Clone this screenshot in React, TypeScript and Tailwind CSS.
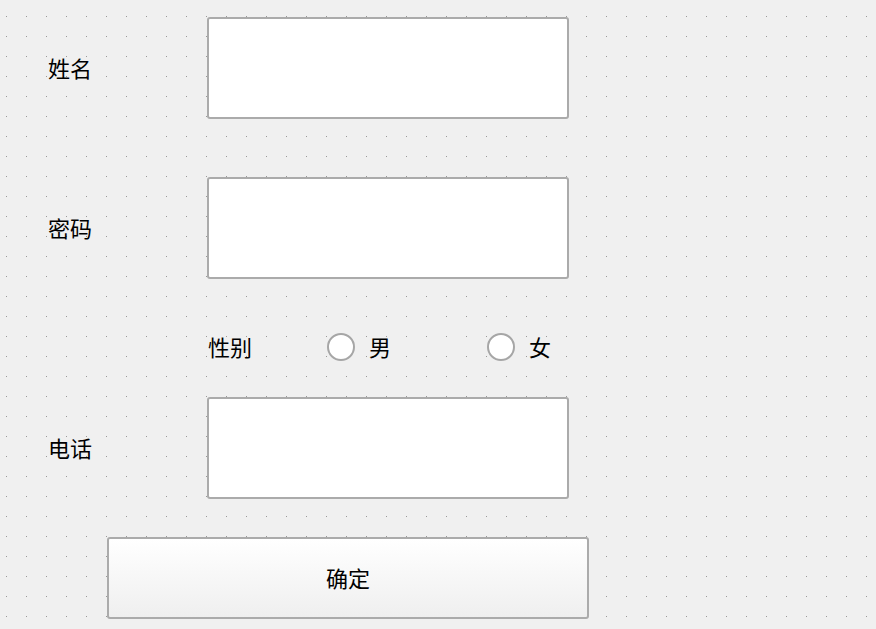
const inputBox =
  "h-[102px] w-[362px] shrink-0 rounded-[3px] border-2 border-[#ababab] bg-white";

function Radio({ label, checked = false }: { label: string; checked?: boolean }) {
  return (
    <label className="flex items-center gap-[14px]">
      <span className="flex h-[28px] w-[28px] items-center justify-center rounded-full border-2 border-[#a6a6a6] bg-white">
        {checked && <span className="h-[10px] w-[10px] rounded-full bg-[#333]" />}
      </span>
      <span className="pb-[2px]">{label}</span>
    </label>
  );
}

function FieldRow({ label }: { label: string }) {
  return (
    <div className="flex items-center">
      <div className="w-[207px] shrink-0 pb-[3px] pl-[48px]">{label}</div>
      <div className={inputBox} />
    </div>
  );
}

export default function App() {
  return (
    <div
      className="h-[629px] w-[876px] overflow-hidden bg-[#999999] [background-image:linear-gradient(to_right,transparent_1px,#f0f0f0_1px),linear-gradient(to_bottom,transparent_1px,#f0f0f0_1px)] [background-size:20px_20px] [background-position:6px_16px] text-[22px] leading-none text-black"
      style={{ fontFamily: '"Noto Sans CJK SC", "Noto Sans", sans-serif' }}
    >
      <div className="flex flex-col pt-[17px]">
        <FieldRow label="姓名" />

        <div className="mt-[58px]">
          <FieldRow label="密码" />
        </div>

        <div className="mt-[54px] flex h-[28px] items-center pl-[208px]">
          <span className="w-[119px] shrink-0 pb-[2px]">性别</span>
          <div className="w-[160px] shrink-0">
            <Radio label="男" />
          </div>
          <Radio label="女" />
        </div>

        <div className="mt-[36px]">
          <FieldRow label="电话" />
        </div>

        <div className="mt-[38px] pl-[107px]">
          <button className="flex h-[82px] w-[482px] items-center justify-center rounded-[3px] border-2 border-[#ababab] bg-gradient-to-b from-white to-[#efefef] pb-[3px]">
            确定
          </button>
        </div>
      </div>
    </div>
  );
}
